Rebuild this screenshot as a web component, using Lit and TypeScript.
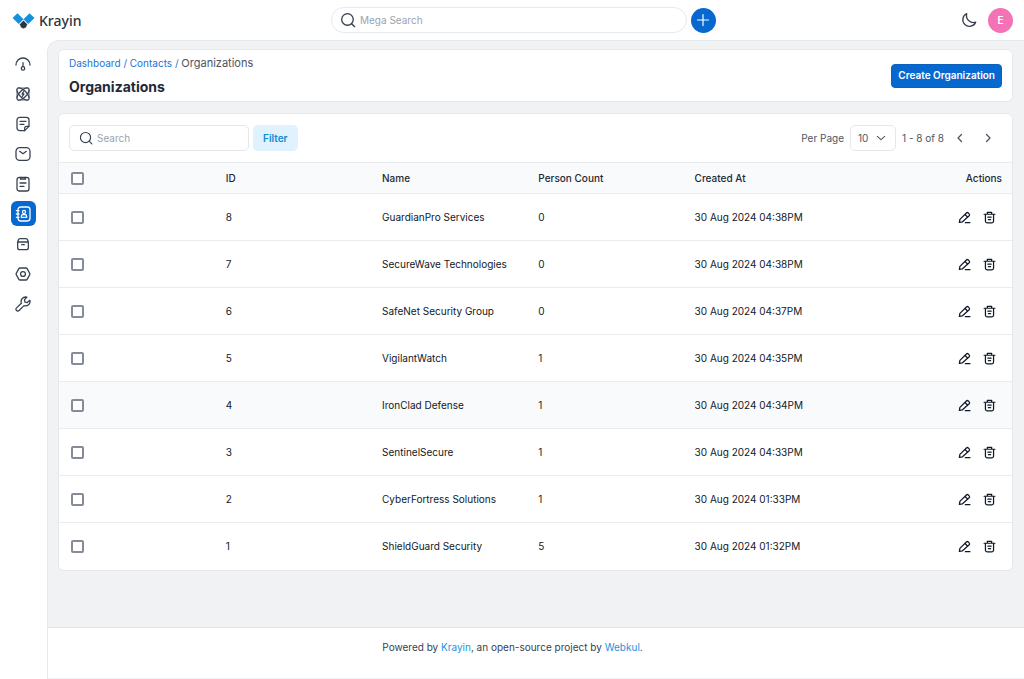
import { LitElement, html, css, svg, TemplateResult } from "lit";
import { customElement, state } from "lit/decorators.js";

interface Organization {
  id: number;
  name: string;
  persons: number;
  createdAt: string;
}

const organizations: Organization[] = [
  { id: 8, name: "GuardianPro Services", persons: 0, createdAt: "30 Aug 2024 04:38PM" },
  { id: 7, name: "SecureWave Technologies", persons: 0, createdAt: "30 Aug 2024 04:38PM" },
  { id: 6, name: "SafeNet Security Group", persons: 0, createdAt: "30 Aug 2024 04:37PM" },
  { id: 5, name: "VigilantWatch", persons: 1, createdAt: "30 Aug 2024 04:35PM" },
  { id: 4, name: "IronClad Defense", persons: 1, createdAt: "30 Aug 2024 04:34PM" },
  { id: 3, name: "SentinelSecure", persons: 1, createdAt: "30 Aug 2024 04:33PM" },
  { id: 2, name: "CyberFortress Solutions", persons: 1, createdAt: "30 Aug 2024 01:33PM" },
  { id: 1, name: "ShieldGuard Security", persons: 5, createdAt: "30 Aug 2024 01:32PM" },
];

const glyphs: Record<string, TemplateResult> = {
  dashboard: svg`<path d="M1.500 13.500a10.500 10.500 0 0 1 21 0M12 10v6"/><circle cx="12" cy="18.700" r="2.600"/>`,
  leads: svg`<ellipse cx="12" cy="12" rx="12" ry="5.200" transform="rotate(45 12 12)"/><ellipse cx="12" cy="12" rx="12" ry="5.200" transform="rotate(-45 12 12)"/><path d="M5 3h14M5 21h14M3 6v12M21 6v12" stroke-width="1.200"/><path d="M13 8.500l-2.500 3.500h3L11 15.500"/>`,
  quotes: svg`<path d="M14.500 22H7A4 4 0 0 1 3 18V6A4 4 0 0 1 7 2h10a4 4 0 0 1 4 4v9.500z"/><path d="M14.500 22V18.500a3 3 0 0 1 3-3H21M7.500 8h9M7.500 12.500h6"/>`,
  mail: svg`<rect x="1.500" y="2.500" width="21" height="19" rx="5.500"/><path d="M7 8l5 3.500 5-3.500"/>`,
  activities: svg`<rect x="3" y="2" width="18" height="20.500" rx="3.500"/><path d="M8.500 2.500v2h7v-2" stroke-width="2.600"/><path d="M7.500 10.500h9M7.500 15.500h6"/>`,
  contacts: svg`<rect x="4.500" y="1.500" width="18" height="21" rx="4"/><path d="M2 7h4M2 12h4M2 17h4"/><circle cx="13.500" cy="9" r="2.300"/><path d="M9.500 17v-1.500a2.500 2.500 0 0 1 2.500-2.500h3a2.500 2.500 0 0 1 2.500 2.500V17z"/>`,
  products: svg`<path d="M4 9h16v8.500a3 3 0 0 1-3 3H7a3 3 0 0 1-3-3zM4 9l1-3A3 3 0 0 1 8 4h8a3 3 0 0 1 3 2l1 3M10 13h4"/>`,
  settings: svg`<path d="M7.500 3h9a2 2 0 0 1 1.700 1l3.900 7a2 2 0 0 1 0 2l-3.900 7a2 2 0 0 1-1.700 1h-9a2 2 0 0 1-1.700-1l-3.900-7a2 2 0 0 1 0-2l3.900-7a2 2 0 0 1 1.700-1z"/><circle cx="12" cy="12" r="3.700"/>`,
  configuration: svg`<path d="M17.800 1.800a6.800 6.800 0 0 0-8.200 9L2.300 17.800a2.600 2.600 0 0 0 3.900 3.900L13.500 14.500a6.800 6.800 0 0 0 8.800-8.300l-3.800 3.600-3.600-.700-.700-3.600z"/>`,
  search: svg`<circle cx="11.200" cy="11.200" r="8.700"/><path d="M17.500 17.500l4.500 4.500"/>`,
  plus: svg`<path d="M12 2.500v19M2.500 12h19"/>`,
  moon: svg`<path d="M8.500 2.500a10 10 0 1 0 13.500 12.800C15 17.500 6.500 12 8.500 2.500z"/>`,
  edit: svg`<path d="M2.500 21l1-5.500L15.500 3.600a2.500 2.500 0 0 1 3.500 0l1.600 1.600a2.500 2.500 0 0 1 0 3.500L8.300 20zM13 6.500l5 5M13.500 21.500h8.500"/>`,
  trash: svg`<path d="M2 6h20M8 5.500V2.500h8v3M4.500 6v12.500a3.500 3.500 0 0 0 3.500 3.500h8a3.500 3.500 0 0 0 3.500-3.500V6M9 11.500h6M10 16h4"/>`,
  left: svg`<path d="M15 5l-7 7 7 7"/>`,
  right: svg`<path d="M9 5l7 7-7 7"/>`,
  down: svg`<path d="M3 8l9 8 9-8"/>`,
};

const icon = (name: string) => html`<svg class="icon" viewBox="0 0 24 24" aria-hidden="true">${glyphs[name]}</svg>`;

const menu = [
  ["dashboard", "Dashboard"],
  ["leads", "Leads"],
  ["quotes", "Quotes"],
  ["mail", "Mail"],
  ["activities", "Activities"],
  ["contacts", "Contacts"],
  ["products", "Products"],
  ["settings", "Settings"],
  ["configuration", "Configuration"],
];

const base = css`
  * { box-sizing: border-box; }
  a { text-decoration: none; color: inherit; }
  button, input, select { font: inherit; color: inherit; margin: 0; padding: 0; border: 0; background: none; }
  button { cursor: pointer; }
  .icon {
    display: block; width: 16px; height: 16px; flex: none;
    fill: none; stroke: currentColor; stroke-width: 2;
    stroke-linecap: round; stroke-linejoin: round;
  }
`;

@customElement("app-topbar")
class AppTopbar extends LitElement {
  static styles = [base, css`
    :host { display: grid; grid-template-columns: 160fr 385px 149fr; align-items: center; height: 40px; padding: 0 11px 0 12px; background: #fff; }
    .brand { display: flex; align-items: center; gap: 4px; font: 500 14px/20px "Noto Sans", sans-serif; color: #2b3440; padding-top: 1px; }
    .mark { width: 23px; height: 18px; }
    .middle { display: flex; align-items: center; gap: 4px; }
    .search { flex: 1; display: flex; align-items: center; gap: 4px; height: 26px; padding: 0 10px 0 8px; border: 1px solid #e8eaed; border-radius: 13px; color: #374151; }
    .search input { flex: 1; min-width: 0; outline: none; }
    .search input::placeholder { color: #9ca3af; }
    .add { display: grid; place-items: center; width: 25px; height: 25px; border-radius: 50%; background: #0769d0; color: #fff; }
    .add .icon { width: 14px; height: 14px; }
    .right { display: flex; justify-content: flex-end; align-items: center; gap: 11px; color: #374151; }
    .avatar { width: 25px; height: 25px; border-radius: 50%; background: #f472b6; color: #fff; font-weight: 600; }
  `];

  render() {
    return html`
      <a class="brand" href="#">
        <svg class="mark" viewBox="0 0 23 18" aria-hidden="true">
          <path d="M0.500 6L5.500 1.300l6 6-4.700 4.700zM22.500 6l-5-4.700-6 6 4.700 4.700z" fill="#1291dc"/>
          <path d="M11.500 8.300l4 4-1.300 3.200-2.700 1.300-2.700-1.300-1.300-3.200z" fill="#2a3444" stroke="#fff" stroke-width="0.500"/>
        </svg>
        <span>Krayin</span>
      </a>
      <div class="middle">
        <label class="search">${icon("search")}<input type="text" placeholder="Mega Search" aria-label="Mega Search"></label>
        <button class="add" aria-label="Quick add">${icon("plus")}</button>
      </div>
      <div class="right">
        <button aria-label="Dark mode">${icon("moon")}</button>
        <button class="avatar">E</button>
      </div>`;
  }
}

@customElement("app-sidebar")
class AppSidebar extends LitElement {
  static styles = [base, css`
    :host { display: block; flex: none; width: 47px; background: #fff; }
    nav { display: flex; flex-direction: column; gap: 5px; padding: 11px; }
    .item { display: grid; place-items: center; width: 25px; height: 25px; padding-right: 1px; border-radius: 6px; color: #374151; }
    .item .icon { stroke-width: 1.900; }
    .active { background: #0769d0; color: #fff; }
  `];

  render() {
    return html`<nav>
      ${menu.map(([key, label]) => html`
        <a class="item ${key === "contacts" ? "active" : ""}" href="#" aria-label=${label}>${icon(key)}</a>`)}
    </nav>`;
  }
}

@customElement("organization-grid")
class OrganizationGrid extends LitElement {
  @state() private highlighted = 4;

  static styles = [base, css`
    :host { display: block; background: #fff; border: 1px solid #e6e8ec; border-radius: 6px; overflow: hidden; }
    .toolbar { display: flex; justify-content: space-between; align-items: center; padding: 11px 10px; }
    .group { display: flex; align-items: center; }
    .left { gap: 4px; }
    .search { display: flex; align-items: center; gap: 4px; width: 180px; height: 26px; padding: 0 9px; border: 1px solid #e5e7eb; border-radius: 5px; color: #374151; }
    .search input { flex: 1; min-width: 0; outline: none; }
    .search input::placeholder { color: #9ca3af; }
    .search .icon { width: 14px; height: 14px; }
    .filter { height: 26px; padding: 0 10px; border-radius: 5px; background: #e0f2fe; color: #0d8bd3; font-weight: 600; }
    .pager { gap: 6px; color: #4b5563; }
    .select { display: grid; align-items: center; width: 46px; }
    .select select { grid-area: 1 / 1; height: 26px; padding-left: 7px; border: 1px solid #e5e7eb; border-radius: 5px; appearance: none; }
    .select .icon { grid-area: 1 / 1; justify-self: end; width: 10px; height: 10px; margin-right: 10px; stroke-width: 2.500; pointer-events: none; }
    .arrows { display: flex; gap: 4px; margin-left: -2px; }
    .arrows button { display: grid; place-items: center; width: 24px; height: 24px; }
    .arrows .icon { width: 12px; height: 12px; stroke-width: 2.500; }
    .pager { padding-right: 2px; }
    table { width: 100%; border-collapse: collapse; table-layout: fixed; color: #1f2937; }
    th, td { padding: 0; text-align: left; font-weight: 500; border-top: 1px solid #e9ebef; }
    td { height: 47px; font-weight: 400; color: #111827; }
    th { height: 31px; background: #f8fafb; }
    .pick { width: 17.500%; padding-left: 12px; }
    .data { width: 16.400%; }
    .end { text-align: right; padding-right: 10px; }
    .hover td { background: #f8fafb; }
    .pick input { display: block; appearance: none; width: 13px; height: 13px; border: 2px solid #858b99; border-radius: 2px; background: #fff; }
    .pick input:checked { background: #0769d0; border-color: #0769d0; }
    .actions { display: flex; justify-content: flex-end; gap: 12px; padding-right: 6px; }
    .actions .icon { width: 13px; height: 13px; stroke-width: 2.300; }
  `];

  render() {
    return html`
      <div class="toolbar">
        <div class="group left">
          <label class="search">${icon("search")}<input type="text" placeholder="Search" aria-label="Search"></label>
          <button class="filter">Filter</button>
        </div>
        <div class="group pager">
          <label for="per-page">Per Page</label>
          <div class="select">
            <select id="per-page"><option>10</option><option>20</option><option>50</option></select>
            ${icon("down")}
          </div>
          <span>1 - 8 of 8</span>
          <div class="arrows">
            <button aria-label="Previous page">${icon("left")}</button>
            <button aria-label="Next page">${icon("right")}</button>
          </div>
        </div>
      </div>
      <table>
        <thead>
          <tr>
            <th class="pick"><input type="checkbox" aria-label="Select all"></th>
            <th class="data">ID</th>
            <th class="data">Name</th>
            <th class="data">Person Count</th>
            <th class="data">Created At</th>
            <th class="end">Actions</th>
          </tr>
        </thead>
        <tbody>
          ${organizations.map((o) => html`
            <tr class=${o.id === this.highlighted ? "hover" : ""} @mouseenter=${() => (this.highlighted = o.id)}>
              <td class="pick"><input type="checkbox" aria-label="Select ${o.name}"></td>
              <td>${o.id}</td>
              <td>${o.name}</td>
              <td>${o.persons}</td>
              <td>${o.createdAt}</td>
              <td class="end">
                <div class="actions">
                  <button aria-label="Edit ${o.name}">${icon("edit")}</button>
                  <button aria-label="Delete ${o.name}">${icon("trash")}</button>
                </div>
              </td>
            </tr>`)}
        </tbody>
      </table>`;
  }
}

@customElement("app-root")
class AppRoot extends LitElement {
  static styles = [base, css`
    :host { display: flex; flex-direction: column; min-height: 100vh; background: #fff; font: 400 10px/15px Inter, "Liberation Sans", sans-serif; color: #1f2937; }
    .body { flex: 1; display: flex; }
    .page { flex: 1; min-width: 0; display: flex; flex-direction: column; border-left: 1px solid #e6e8ec; border-top: 1px solid #e6e8ec; border-top-left-radius: 12px; background: #f1f2f4; overflow: hidden; }
    main { flex: 1; display: flex; flex-direction: column; gap: 11px; padding: 8px 11px 12px 10px; }
    .head { display: flex; justify-content: space-between; align-items: center; height: 53px; padding: 0 10px; background: #fff; border: 1px solid #e6e8ec; border-radius: 6px; }
    .titles { display: flex; flex-direction: column; gap: 7px; }
    .crumbs { color: #2174d4; }
    .current { font-size: 11px; color: #4b5563; }
    h1 { margin: 0; font-size: 14px; line-height: 17px; font-weight: 700; color: #1f2937; }
    .create { height: 24px; padding: 0 6px; border: 1px solid #0a62bd; border-radius: 4px; background: #0769d0; color: #fff; font-weight: 600; }
    footer { height: 52px; padding-top: 12px; border-top: 1px solid #e1e4e8; border-bottom: 1px solid #f1f2f4; background: #fff; text-align: center; color: #374151; padding-right: 47px; }
    footer a { color: #1d93dd; }
  `];

  render() {
    return html`
      <app-topbar></app-topbar>
      <div class="body">
        <app-sidebar></app-sidebar>
        <div class="page">
          <main>
            <section class="head">
              <div class="titles">
                <nav class="crumbs"><a href="#">Dashboard</a> / <a href="#">Contacts</a> / <span class="current">Organizations</span></nav>
                <h1>Organizations</h1>
              </div>
              <button class="create">Create Organization</button>
            </section>
            <organization-grid></organization-grid>
          </main>
          <footer>Powered by <a href="#">Krayin</a>, an open-source project by <a href="#">Webkul</a>.</footer>
        </div>
      </div>`;
  }
}
